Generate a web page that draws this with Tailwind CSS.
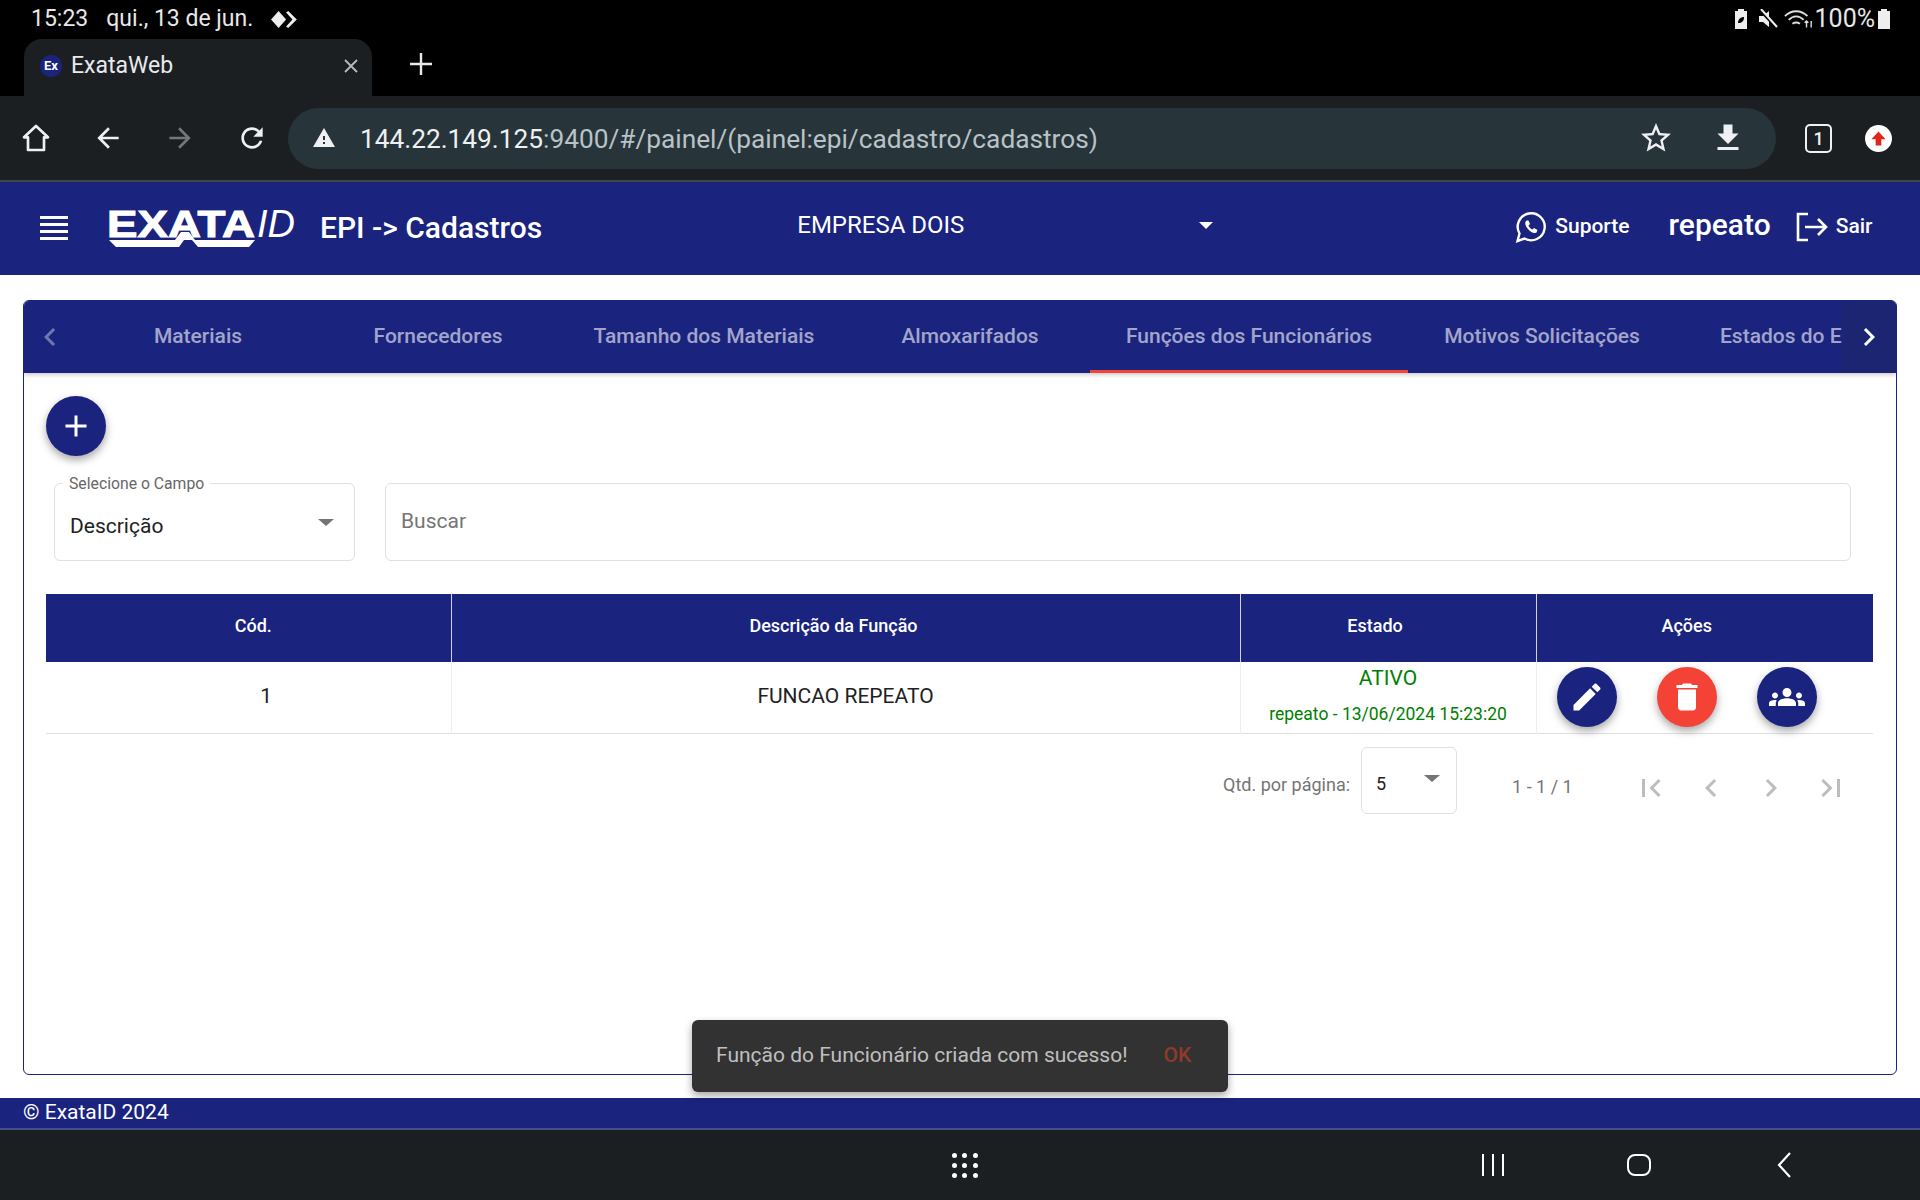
<!DOCTYPE html>
<html lang="pt">
<head>
    <meta charset="UTF-8">
    <title>ExataWeb</title>
    <script src="https://cdn.jsdelivr.net/npm/@tailwindcss/browser@4"></script>
</head>
<body class="relative h-[1200px] w-[1920px] overflow-hidden flex flex-col bg-white font-['Roboto',sans-serif]">

    <!-- Status bar -->
    <div class="h-[38px] bg-black text-[#e8e8e8] flex items-center pl-[31px] pr-[30px] text-[23px]">
        <span>15:23</span>
        <span class="ml-[18px]">qui., 13 de jun.</span>
        <svg class="ml-[17px] w-[30px] h-[21px]" viewBox="0 0 28 18" fill="#eee"><path d="M8 1l7 8-7 8-7-8z"/><path d="M17 1l8 8-8 8-2-1.500 6-6.500-6-6.500z"/></svg>
        <div class="ml-auto flex items-center">
            <svg class="w-[14px] h-[20px]" viewBox="0 0 14 20" fill="#eee"><path d="M4 0h6v2h3v18H1V2h3z"/><path d="M4 14c0-4 3-6 6-6 0 4-2 6-6 6z" fill="#000"/></svg>
            <svg class="ml-[10px] w-[20px] h-[20px]" viewBox="0 0 20 20" fill="#eee"><path d="M1 7h4l6-5v16l-6-5H1z"/><path d="M2 1l16 17" stroke="#000" stroke-width="3"/><path d="M3 0l16 18" stroke="#eee" stroke-width="2"/></svg>
            <svg class="ml-[6px] w-[30px] h-[22px]" viewBox="0 0 32 22" fill="none" stroke="#ddd" stroke-width="2"><path d="M1 8c7-7 17-7 24 0"/><path d="M5 12c5-5 11-5 16 0"/><path d="M9 16c3-2 5-2 8 0"/><path d="M24 20v-7m-2 2l2-2 2 2M29 13v7" stroke-width="1.500"/></svg>
            <span class="ml-[1px] text-[25px] leading-[30px]">100%</span>
            <svg class="ml-[3px] w-[12px] h-[20px]" viewBox="0 0 12 20" fill="#eee"><path d="M3 0h6v2h3v18H0V2h3z"/></svg>
        </div>
    </div>

    <!-- Browser tabs -->
    <div class="h-[58px] bg-black flex items-end pl-[24px]">
        <div class="w-[348px] h-[57px] bg-[#1b1f22] rounded-t-[18px] flex items-center pl-[16px] pr-[9px] pb-[3px] text-[#e8eaed]">
            <span class="w-[22px] h-[22px] rounded-full bg-[#1a237e] text-white text-[13px] font-bold flex items-center justify-center">Ex</span>
            <span class="ml-[9px] text-[23px]">ExataWeb</span>
            <svg class="ml-auto w-[24px] h-[24px]" viewBox="0 0 24 24" fill="none" stroke="#b8bcc0" stroke-width="1.800"><path d="M6 6l12 12M18 6L6 18"/></svg>
        </div>
        <svg class="ml-[35px] mb-[18px] w-[28px] h-[28px]" viewBox="0 0 28 28" fill="none" stroke="#e8eaed" stroke-width="2.400"><path d="M14 3v22M3 14h22"/></svg>
    </div>

    <!-- Browser toolbar -->
    <div class="h-[86px] bg-[#1b1f22] border-b-2 border-[#3d4a3f] flex items-center pl-[20px] shrink-0">
        <svg class="w-[32px] h-[32px]" viewBox="0 0 24 24" fill="none" stroke="#eef0f1" stroke-width="2" stroke-linejoin="round"><path d="M12 3l9 8.500h-3V21H6v-9.500H3z"/></svg>
        <svg class="ml-[40px] w-[32px] h-[32px]" viewBox="0 0 24 24" fill="#eef0f1"><path d="M20 11H7.830l5.590-5.590L12 4l-8 8 8 8 1.410-1.410L7.830 13H20v-2z"/></svg>
        <svg class="ml-[40px] w-[32px] h-[32px]" viewBox="0 0 24 24" fill="#72777a"><path d="M12 4l-1.410 1.410L16.170 11H4v2h12.170l-5.580 5.590L12 20l8-8z"/></svg>
        <svg class="ml-[40px] w-[32px] h-[32px]" viewBox="0 0 24 24" fill="#eef0f1"><path d="M17.650 6.350C16.200 4.900 14.210 4 12 4c-4.420 0-7.990 3.580-7.990 8s3.570 8 7.990 8c3.730 0 6.840-2.550 7.730-6h-2.080c-.82 2.330-3.040 4-5.650 4-3.310 0-6-2.690-6-6s2.690-6 6-6c1.660 0 3.140.69 4.220 1.780L13 11h7V4l-2.350 2.350z"/></svg>
        <div class="ml-[20px] w-[1488px] h-[61px] rounded-full bg-[#27343a] flex items-center pl-[24px] pr-[30px]">
            <svg class="w-[24px] h-[24px]" viewBox="0 0 24 24" fill="#eef0f1"><path d="M1 21h22L12 2 1 21zm12-3h-2v-2h2v2zm0-4h-2v-4h2v4z"/></svg>
            <span class="ml-[24px] mt-[4px] text-[26.250px] text-[#b9c2c6] whitespace-nowrap"><span class="text-[#eef0f1]">144.22.149.125</span>:9400/#/painel/(painel:epi/cadastro/cadastros)</span>
            <svg class="ml-auto w-[36px] h-[36px]" viewBox="0 0 24 24" fill="#eef0f1"><path d="M22 9.240l-7.190-.62L12 2 9.190 8.630 2 9.240l5.460 4.730L5.820 21 12 17.270 18.180 21l-1.630-7.030L22 9.240zM12 15.400l-3.760 2.270 1-4.280-3.320-2.880 4.380-.38L12 6.100l1.710 4.040 4.380.38-3.320 2.880 1 4.280L12 15.400z"/></svg>
            <svg class="ml-[36px] w-[36px] h-[36px]" viewBox="0 0 24 24" fill="#eef0f1"><path d="M19 9h-4V3H9v6H5l7 7 7-7zM5 18v2h14v-2H5z"/></svg>
        </div>
        <div class="ml-[29px] w-[27px] h-[29px] rounded-[5px] border-2 border-[#eef0f1] text-[#eef0f1] text-[18px] font-medium flex items-center justify-center">1</div>
        <div class="ml-[33px] w-[27px] h-[27px] rounded-full bg-white flex items-center justify-center">
            <svg class="w-[17px] h-[17px]" viewBox="0 0 24 24" fill="#e3261b"><path d="M12 2l10 11h-6v9H8v-9H2z"/></svg>
        </div>
    </div>

    <!-- App header -->
    <header class="h-[93px] bg-[#1a237e] text-white flex items-center shrink-0 pl-[36px] pb-[3px]">
        <svg class="w-[36px] h-[32px]" viewBox="0 0 36 32" fill="#fff"><path d="M4 5h28v3H4zM4 12h28v3H4zM4 19h28v3H4zM4 26h28v3H4z"/></svg>
        <svg class="ml-[34px] w-[192px] h-[50px]" viewBox="0 0 192 50" fill="#fff">
            <text x="1" y="35" textLength="148" lengthAdjust="spacingAndGlyphs" font-family="Liberation Sans" font-weight="700" font-size="36" stroke="#fff" stroke-width="1">EXATA</text>
            <text x="151" y="35" textLength="38" lengthAdjust="spacingAndGlyphs" font-family="Liberation Sans" font-style="italic" font-size="38">ID</text>
            <path d="M3 38h66l6-8h8l6 8h60l-6 7H92l-6-7h-8l-5 7H10z"/>
        </svg>
        <span class="ml-[22px] text-[30px] font-medium whitespace-nowrap">EPI -&gt; Cadastros</span>
        <div class="ml-[255px] w-[422px] flex items-center pr-[6px] -mt-[4px]">
            <span class="text-[24px]">EMPRESA DOIS</span>
            <span class="ml-auto w-0 h-0 border-x-[7px] border-x-transparent border-t-[7px] border-t-white"></span>
        </div>
        <svg class="ml-[296px] w-[32px] h-[32px]" viewBox="0 0 32 32" fill="none" stroke="#fff" stroke-width="2.400"><path d="M2.500 30l2-7.500A13.500 13.500 0 1 1 9.500 27.500z"/><path d="M11.500 9.500c-2 1.500-1.500 5 1.500 8.500s6 5 8.500 3.500l1-2.500-3.500-2-1.500 1.500c-1.500-.5-3.500-2.500-4-4l1.500-1.500-1.500-3.500z" fill="#fff" stroke="none"/></svg>
        <span class="ml-[8px] text-[21px] font-medium">Suporte</span>
        <span class="ml-[39px] text-[30px] font-medium -mt-[6px]">repeato</span>
        <svg class="ml-[25px] w-[32px] h-[32px]" viewBox="0 0 32 32" fill="none" stroke="#fff" stroke-width="2.600"><path d="M12 3H2v26h10"/><path d="M9 16h21M22 8l8 8-8 8"/></svg>
        <span class="ml-[8px] text-[21px] font-medium">Sair</span>
    </header>

    <!-- Page content -->
    <main class="flex-1 px-[23px] pt-[25px] pb-[23px]">
        <div class="h-full border border-[#1a237e] rounded-[6px] overflow-hidden">
            <!-- Tabs -->
            <div class="h-[72px] bg-[#1a237e] flex text-[21px] font-medium text-white/60 shadow-[0_2px_4px_rgba(0,0,0,0.2)]">
                <div class="w-[54px] shrink-0 flex items-center pl-[8px]">
                    <svg class="w-[36px] h-[36px]" viewBox="0 0 24 24" fill="#ffffff61"><path d="M15.410 7.410L14 6l-6 6 6 6 1.410-1.410L10.830 12z"/></svg>
                </div>
                <div class="flex-1 flex overflow-hidden">
                    <div class="w-[240px] shrink-0 flex items-center justify-center">Materiais</div>
                    <div class="w-[240px] shrink-0 flex items-center justify-center">Fornecedores</div>
                    <div class="w-[292px] shrink-0 flex items-center justify-center">Tamanho dos Materiais</div>
                    <div class="w-[240px] shrink-0 flex items-center justify-center">Almoxarifados</div>
                    <div class="w-[318px] shrink-0 flex items-center justify-center border-b-[3px] border-[#f44336] pt-[3px]">Funções dos Funcionários</div>
                    <div class="w-[268px] shrink-0 flex items-center justify-center">Motivos Solicitações</div>
                    <div class="w-[240px] shrink-0 flex items-center pl-[44px] whitespace-nowrap">Estados do EPI</div>
                </div>
                <div class="w-[54px] shrink-0 flex items-center justify-center bg-[#1c2572]">
                    <svg class="w-[36px] h-[36px]" viewBox="0 0 24 24" fill="#fff"><path d="M10 6L8.590 7.410 13.170 12l-4.580 4.590L10 18l6-6z"/></svg>
                </div>
            </div>

            <div class="pl-[22px] pr-[23px]">
                <button class="mt-[23px] w-[60px] h-[60px] rounded-full bg-[#1a237e] flex items-center justify-center shadow-[0_4px_8px_rgba(0,0,0,0.35)]">
                    <svg class="w-[36px] h-[36px]" viewBox="0 0 24 24" fill="#fff"><path d="M19 13h-6v6h-2v-6H5v-2h6V5h2v6h6v2z"/></svg>
                </button>

                <!-- Filters -->
                <div class="mt-[27px] flex pl-[8px] pr-[22px]">
                    <div class="relative w-[301px] h-[78px] border border-[#e0e0e0] rounded-[6px] flex items-center pl-[15px] pr-[20px] pt-[10px]">
                        <span class="absolute left-[8px] -top-[9px] bg-white px-[6px] text-[15.750px] leading-[18px] text-[#666]">Selecione o Campo</span>
                        <span class="text-[21px] text-[#212121]">Descrição</span>
                        <span class="ml-auto -mt-[10px] w-0 h-0 border-x-[8px] border-x-transparent border-t-[7px] border-t-[#757575]"></span>
                    </div>
                    <div class="ml-[30px] flex-1 h-[78px] border border-[#e0e0e0] rounded-[6px] flex items-center pl-[15px] text-[21px] text-[#757575]">Buscar</div>
                </div>

                <!-- Table -->
                <table class="mt-[33px] w-[1827px] table-fixed border-collapse">
                    <thead class="bg-[#1a237e] text-white text-[18px] font-medium">
                        <tr class="h-[68px]">
                            <th class="w-[405px] pl-[10px] pb-[5px] font-medium border-r border-white/80">Cód.</th>
                            <th class="w-[789px] pr-[24px] pb-[5px] font-medium border-r border-white/80">Descrição da Função</th>
                            <th class="w-[296px] pr-[26px] pb-[5px] font-medium border-r border-white/80">Estado</th>
                            <th class="pr-[36px] pb-[5px] font-medium">Ações</th>
                        </tr>
                    </thead>
                    <tbody>
                        <tr class="h-[71px] border-b border-[#e0e0e0] text-[21px] text-[#212121]">
                            <td class="text-center pl-[36px] pb-[2px] border-r border-[#eeeeee]">1</td>
                            <td class="text-center pb-[2px] border-r border-[#eeeeee]">FUNCAO REPEATO</td>
                            <td class="text-center border-r border-[#eeeeee] text-[#008000]">
                                <div class="-mt-[4px] text-[21px]">ATIVO</div>
                                <div class="mt-[7px] text-[17.500px] whitespace-nowrap">repeato - 13/06/2024 15:23:20</div>
                            </td>
                            <td class="pl-[20px]">
                                <div class="flex gap-[40px]">
                                    <button class="w-[60px] h-[60px] rounded-full bg-[#1a237e] flex items-center justify-center shadow-[0_4px_8px_rgba(0,0,0,0.35)]">
                                        <svg class="w-[36px] h-[36px]" viewBox="0 0 24 24" fill="#fff"><path d="M3 17.250V21h3.750L17.810 9.940l-3.750-3.750L3 17.250zM20.710 7.040c.39-.39.39-1.020 0-1.410l-2.340-2.340c-.39-.39-1.020-.39-1.410 0l-1.830 1.830 3.750 3.750 1.830-1.830z"/></svg>
                                    </button>
                                    <button class="w-[60px] h-[60px] rounded-full bg-[#f44336] flex items-center justify-center shadow-[0_4px_8px_rgba(0,0,0,0.35)]">
                                        <svg class="w-[36px] h-[36px]" viewBox="0 0 24 24" fill="#fff"><path d="M6 19c0 1.100.9 2 2 2h8c1.100 0 2-.9 2-2V7H6v12zM19 4h-3.500l-1-1h-5l-1 1H5v2h14V4z"/></svg>
                                    </button>
                                    <button class="w-[60px] h-[60px] rounded-full bg-[#1a237e] flex items-center justify-center shadow-[0_4px_8px_rgba(0,0,0,0.35)]">
                                        <svg class="w-[36px] h-[36px]" viewBox="0 0 24 24" fill="#fff"><path d="M12 12.750c1.630 0 3.070.39 4.240.9 1.080.48 1.760 1.560 1.760 2.730V18H6v-1.610c0-1.180.68-2.260 1.760-2.730 1.170-.52 2.610-.91 4.240-.91zM4 13c1.100 0 2-.9 2-2s-.9-2-2-2-2 .9-2 2 .9 2 2 2zm1.130 1.100C4.760 14.040 4.390 14 4 14c-.99 0-1.930.21-2.780.58C.48 14.900 0 15.620 0 16.430V18h4.500v-1.610c0-.83.23-1.610.63-2.290zM20 13c1.100 0 2-.9 2-2s-.9-2-2-2-2 .9-2 2 .9 2 2 2zm4 3.430c0-.81-.48-1.530-1.220-1.850C21.930 14.210 20.990 14 20 14c-.39 0-.76.04-1.130.1.4.68.63 1.460.63 2.290V18H24v-1.570zM12 6c1.660 0 3 1.340 3 3s-1.340 3-3 3-3-1.340-3-3 1.340-3 3-3z"/></svg>
                                    </button>
                                </div>
                            </td>
                        </tr>
                    </tbody>
                </table>

                <!-- Paginator -->
                <div class="mt-[13px] flex items-start pl-[1177px] text-[18px] text-[#757575]">
                    <span class="mt-[24px] whitespace-nowrap">Qtd. por página:</span>
                    <div class="ml-[11px] w-[96px] h-[67px] border border-[#e0e0e0] rounded-[6px] flex items-center pl-[14px] pr-[16px] text-[#212121]">
                        <span class="mt-[7px]">5</span>
                        <span class="ml-auto -mt-[4px] w-0 h-0 border-x-[8px] border-x-transparent border-t-[7px] border-t-[#757575]"></span>
                    </div>
                    <span class="ml-[55px] mt-[26px] whitespace-nowrap">1 - 1 / 1</span>
                    <div class="ml-[60px] mt-[23px] flex gap-[24px]">
                        <svg class="w-[36px] h-[36px]" viewBox="0 0 24 24" fill="#bdbdbd"><path d="M18.410 16.590L13.820 12l4.590-4.590L17 6l-6 6 6 6zM6 6h2v12H6z"/></svg>
                        <svg class="w-[36px] h-[36px]" viewBox="0 0 24 24" fill="#bdbdbd"><path d="M15.410 7.410L14 6l-6 6 6 6 1.410-1.410L10.830 12z"/></svg>
                        <svg class="w-[36px] h-[36px]" viewBox="0 0 24 24" fill="#bdbdbd"><path d="M10 6L8.590 7.410 13.170 12l-4.580 4.590L10 18l6-6z"/></svg>
                        <svg class="w-[36px] h-[36px]" viewBox="0 0 24 24" fill="#bdbdbd"><path d="M5.590 7.410L10.180 12l-4.590 4.590L7 18l6-6-6-6zM16 6h2v12h-2z"/></svg>
                    </div>
                </div>
            </div>
        </div>
    </main>

    <!-- Footer -->
    <footer class="h-[32px] shrink-0 bg-[#1a237e] border-b-2 border-[#454c87] text-white text-[21px] leading-[28px] pl-[23px]">© ExataID 2024</footer>

    <!-- Android nav bar -->
    <div class="h-[70px] shrink-0 bg-[#1b1f22] relative flex items-center text-white">
        <div class="ml-[952px] w-[26px] grid grid-cols-3 gap-[5px]">
            <span class="w-[5px] h-[5px] rounded-full bg-white"></span><span class="w-[5px] h-[5px] rounded-full bg-white"></span><span class="w-[5px] h-[5px] rounded-full bg-white"></span>
            <span class="w-[5px] h-[5px] rounded-full bg-white"></span><span class="w-[5px] h-[5px] rounded-full bg-white"></span><span class="w-[5px] h-[5px] rounded-full bg-white"></span>
            <span class="w-[5px] h-[5px] rounded-full bg-white"></span><span class="w-[5px] h-[5px] rounded-full bg-white"></span><span class="w-[5px] h-[5px] rounded-full bg-white"></span>
        </div>
        <svg class="ml-[503px] w-[24px] h-[24px]" viewBox="0 0 24 24" fill="none" stroke="#fff" stroke-width="2"><path d="M2 1v22M12 1v22M22 1v22"/></svg>
        <svg class="ml-[122px] w-[24px] h-[24px]" viewBox="0 0 24 24" fill="none" stroke="#fff" stroke-width="2"><rect x="1" y="2" width="22" height="20" rx="7"/></svg>
        <svg class="ml-[124px] w-[20px] h-[26px]" viewBox="0 0 20 26" fill="none" stroke="#fff" stroke-width="2.200"><path d="M15 1L4 13l11 12"/></svg>
    </div>

    <!-- Snackbar -->
    <div class="absolute left-[692px] top-[1020px] w-[536px] h-[72px] rounded-[6px] bg-[#323232] flex items-center pl-[24px] text-[21px] text-white/70 shadow-[0_4px_8px_rgba(0,0,0,0.35)]">
        <span class="whitespace-nowrap">Função do Funcionário criada com sucesso!</span>
        <span class="ml-[36px] text-[#8f3a2c] font-medium">OK</span>
    </div>
</body>
</html>
